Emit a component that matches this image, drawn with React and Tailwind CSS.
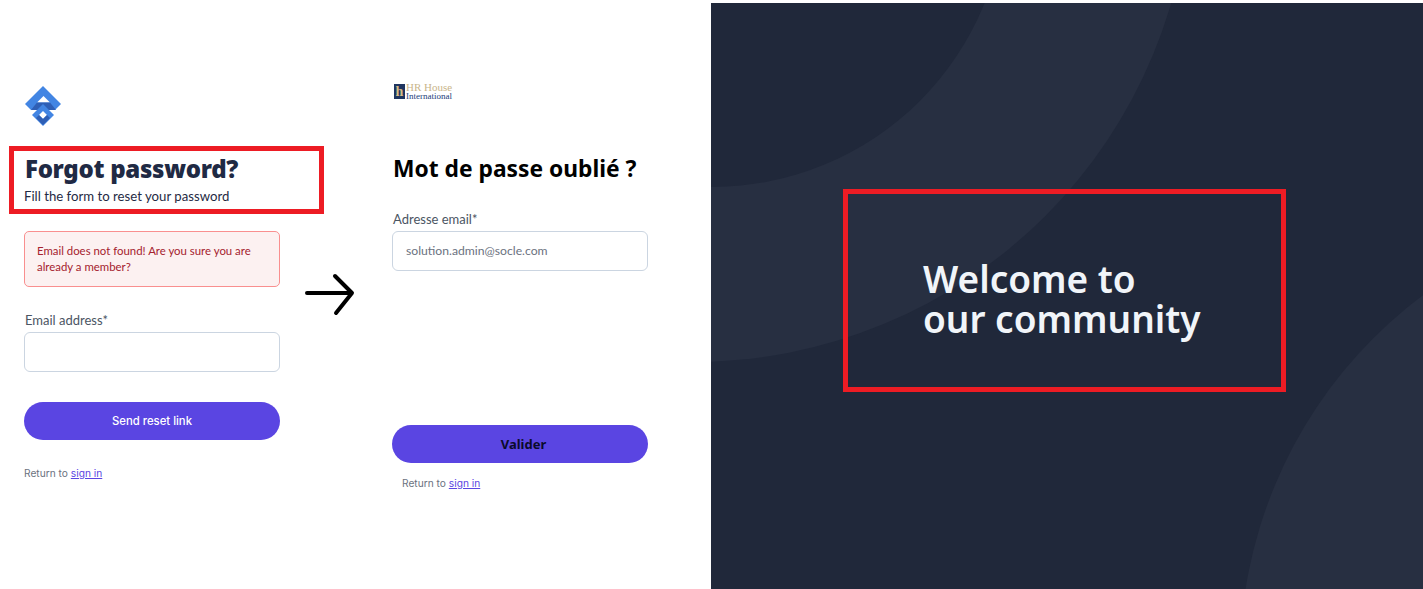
const body = "font-['Lato','Noto_Sans',sans-serif]";

function Logo() {
  return (
    <svg width="38" height="42" viewBox="0 0 38 42" className="block">
      <path d="M19 1 L37 19 L31 25 L7 25 L1 19 Z" fill="#4285e3" />
      <path d="M19.5 11 L26 17.5 L13 17.5 Z" fill="#ffffff" />
      <path d="M7 25 L13 17.5 L26 17.5 L32 25 Z" fill="#2f5fb5" />
      <path d="M19 19 L30 30 L19 41 L8 30 Z" fill="#4285e3" />
      <path d="M19 26 L23 30 L19 34 L15 30 Z" fill="#ffffff" />
      <path d="M19 34 L23 30 L26 33 L19 40 L12 33 L15 30 Z" fill="#2f5fb5" />
    </svg>
  );
}

function HrLogo() {
  return (
    <div className="flex items-center gap-[1px] h-[16px]">
      <div className="w-[11px] h-[15px] bg-[#1f3560] text-[#d8bd85] text-[14px] leading-[15px] font-bold text-center font-['Liberation_Serif',serif]">h</div>
      <div className="flex flex-col">
        <span className="text-[11px] leading-[9px] text-[#c9b58a] font-['Liberation_Serif',serif] whitespace-nowrap">HR House</span>
        <span className="text-[9px] leading-[8px] text-[#23407a] font-['Liberation_Serif',serif] whitespace-nowrap">International</span>
      </div>
    </div>
  );
}

export default function App() {
  return (
    <div className="relative flex w-[1423px] h-[589px] bg-white overflow-hidden">
      <div className="flex w-[711px] h-full">
        <div className={`w-[256px] ml-[24px] pt-[85px] ${body}`}>
          <Logo />
          <h1 className="mt-[26px] pl-[1px] text-[24px] leading-[32px] font-black tracking-[-0.3px] text-[#1f2a44] whitespace-nowrap font-['Noto_Sans',sans-serif]">Forgot password?</h1>
          <p className="mt-[1px] text-[13.2px] leading-[20px] text-[#1f2a44] font-['Lato',sans-serif]">Fill the form to reset your password</p>
          <div className="mt-[25px] h-[56px] rounded-[5px] border border-[#f98f8f] bg-[#fcf1f1] px-[12px] py-[11px] text-[11.4px] leading-[16px] font-normal text-[#a5222e]">
            Email does not found! Are you sure you are already a member?
          </div>
          <label className="block mt-[25px] pl-[1px] text-[13px] leading-[16px] text-[#4b5563]">Email address*</label>
          <div className="mt-[4px] h-[40px] rounded-[6px] border border-[#cbd5e1] bg-white" />
          <button className="mt-[30px] w-full h-[38px] rounded-full bg-[#5a45e2] pt-[1px] text-white text-[11.3px] font-medium font-['Inter',sans-serif]">Send reset link</button>
          <p className="mt-[26px] text-[10.2px] leading-[14px] text-[#6b7280] font-['Inter',sans-serif]">Return to <span className="text-[#5a45e2] underline">sign in</span></p>
        </div>
        <div className={`w-[256px] ml-[112px] pt-[83px] ${body}`}>
          <div className="pl-[2px]"><HrLogo /></div>
          <h1 className="mt-[54px] pl-[1px] text-[22.8px] leading-[32px] font-bold text-black font-['Noto_Sans',sans-serif]">Mot de passe oublié ?</h1>
          <label className="block mt-[26px] pl-[1px] text-[13px] leading-[16px] text-[#4b5563]">Adresse email*</label>
          <div className="mt-[4px] h-[40px] rounded-[6px] border border-[#cbd5e1] bg-white px-[13px] text-[12.2px] leading-[38px] text-[#6b7280]">solution.admin@socle.com</div>
          <button className="mt-[154px] w-full h-[38px] rounded-full bg-[#5a45e2] pl-[7px] pt-[1px] text-[#0b0b2a] text-[13px] font-bold font-['Noto_Sans',sans-serif]">Valider</button>
          <p className="mt-[13px] pl-[10px] text-[10.2px] leading-[14px] text-[#6b7280] font-['Inter',sans-serif]">Return to <span className="text-[#5a45e2] underline">sign in</span></p>
        </div>
      </div>
      <div className="relative flex-1 mt-[3px] bg-[#20283a] overflow-hidden flex items-center">
        <div className="absolute left-[-516px] top-[-637px] w-[996px] h-[996px] rounded-full bg-[#272f41]" />
        <div className="absolute left-[-293px] top-[-404px] w-[588px] h-[588px] rounded-full bg-[#20283a]" />
        <div className="absolute left-[529px] top-[202px] w-[910px] h-[910px] rounded-full bg-[#272f41]" />
        <h2 className="relative ml-[212px] mt-[6px] text-[37px] leading-[40px] font-semibold text-[#f1f5f9] font-['Noto_Sans',sans-serif]">Welcome to<br />our community</h2>
      </div>
      <div className="absolute left-[9px] top-[146px] w-[315px] h-[68px] border-[5px] border-[#ed1c24]" />
      <div className="absolute left-[843px] top-[189px] w-[443px] h-[203px] border-[5px] border-[#ed1c24]" />
      <svg className="absolute left-[304px] top-[272px]" width="52" height="44" viewBox="0 0 52 44" fill="none" stroke="#000" strokeWidth="4" strokeLinecap="round" strokeLinejoin="round">
        <path d="M3 21 H47 M31 4 L48 21 L32 41" />
      </svg>
    </div>
  );
}
